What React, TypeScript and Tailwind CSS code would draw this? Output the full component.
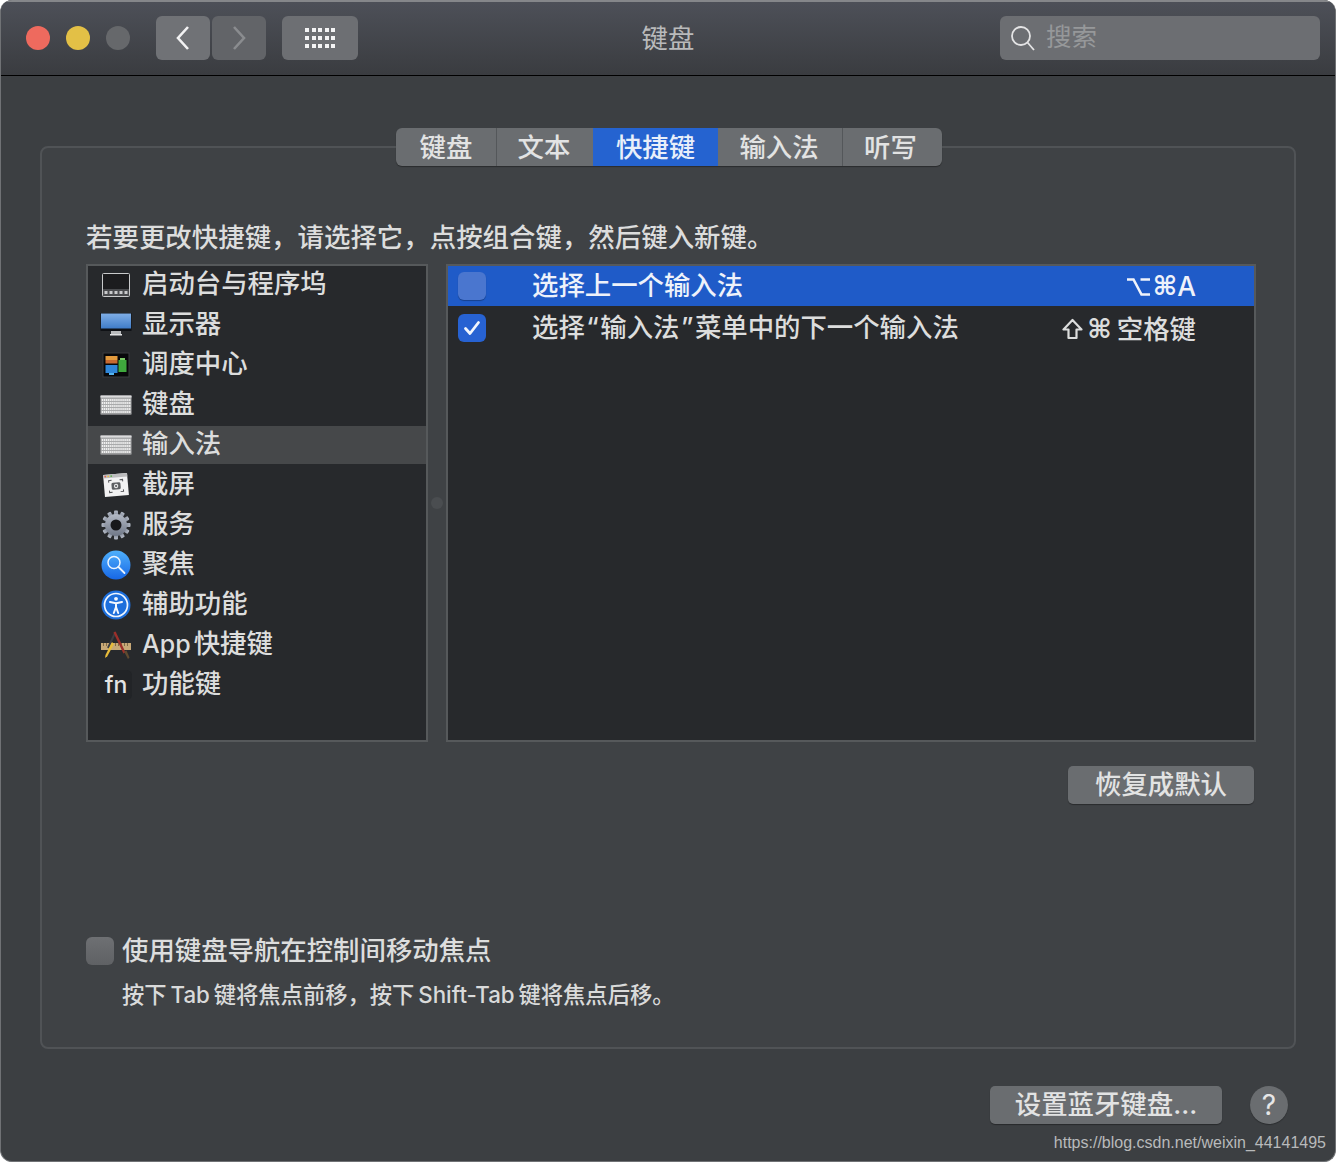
import * as React from 'react';

const FONT = "font-['Inter','Noto_Sans_CJK_SC','Noto_Sans',sans-serif]";

function Launchpad() {
  return (
    <svg width="30" height="26" viewBox="0 0 30 26">
      <rect x="1.5" y="1.5" width="27" height="23" rx="1" fill="#1c1c1e" stroke="#c9cacb" strokeWidth="1" />
      <rect x="2" y="17" width="26" height="7" fill="#4a4b4e" />
      {[5, 10, 15, 20, 25].map((x) => (
        <rect key={x} x={x - 1.5} y="19" width="3" height="3" fill="#c8c9cb" />
      ))}
    </svg>
  );
}

function Display() {
  return (
    <svg width="32" height="26" viewBox="0 0 32 26">
      <defs>
        <linearGradient id="screen" x1="0" y1="0" x2="0" y2="1">
          <stop offset="0" stopColor="#7faee6" />
          <stop offset="1" stopColor="#3f7cc8" />
        </linearGradient>
      </defs>
      <rect x="0.5" y="1" width="31" height="18" fill="#0f1115" />
      <rect x="1" y="1.5" width="30" height="15" fill="url(#screen)" />
      <rect x="11" y="19" width="10" height="3" fill="#b9babc" />
      <rect x="10" y="22" width="12" height="1.5" fill="#e1e2e3" />
    </svg>
  );
}

function MissionControl() {
  return (
    <svg width="28" height="26" viewBox="0 0 28 26">
      <rect x="1" y="1" width="26" height="24" fill="#08080a" stroke="#3b3c3f" />
      <rect x="3.500" y="4" width="12" height="4" fill="#e39a3d" />
      <rect x="3.500" y="8" width="12" height="3.500" fill="#c86a30" />
      <rect x="3.500" y="13" width="12" height="8" fill="#2f86d8" />
      <rect x="7" y="21" width="5" height="2" fill="#56b4ee" />
      <rect x="16.500" y="8" width="8" height="12" fill="#3fa93d" />
      <rect x="18" y="6" width="5" height="2" fill="#7bcb66" />
    </svg>
  );
}

function Keyboard() {
  return (
    <svg width="32" height="20" viewBox="0 0 32 20">
      <rect x="0.5" y="0.5" width="31" height="19" rx="1" fill="#a9aaab" />
      <rect x="0.5" y="0.5" width="31" height="2" fill="#dcdcdd" />
      {[4, 7, 10, 13, 16].map((y) =>
        Array.from({ length: 15 }).map((_, i) => (
          <rect key={`${y}-${i}`} x={1.800 + i * 1.95} y={y} width="1.3" height="2" fill="#f0f0f0" />
        )),
      )}
      <rect x="0.5" y="18.500" width="31" height="1" fill="#8d8e90" />
    </svg>
  );
}

function Screenshot() {
  return (
    <svg width="30" height="28" viewBox="0 0 30 28">
      <g transform="rotate(-5 15 14)">
        <rect x="3" y="3" width="24" height="22" fill="#f2f2f3" />
        <rect x="3" y="3" width="24" height="3.500" fill="#bcbcbe" />
        <circle cx="5" cy="4.700" r="0.900" fill="#e2624f" />
        <circle cx="8" cy="4.700" r="0.900" fill="#e7bf42" />
        <circle cx="11" cy="4.700" r="0.900" fill="#5cb04f" />
        <path d="M8 11v-2h3M19 9h3v2M22 19v2h-3M11 21H8v-2" fill="none" stroke="#55565a" strokeWidth="1" />
        <rect x="10.500" y="11.500" width="9" height="7" rx="1.500" fill="#5d5f63" />
        <circle cx="15" cy="15" r="2.200" fill="#e6e6e7" />
        <circle cx="15" cy="15" r="1.100" fill="#5d5f63" />
      </g>
    </svg>
  );
}

function Gear() {
  const teeth = Array.from({ length: 12 }).map((_, i) => i * 30);
  return (
    <svg width="30" height="30" viewBox="0 0 30 30">
      <defs>
        <linearGradient id="gear" x1="0" y1="0" x2="0" y2="1">
          <stop offset="0" stopColor="#b4bac6" />
          <stop offset="1" stopColor="#6f7787" />
        </linearGradient>
      </defs>
      {teeth.map((a) => (
        <rect key={a} x="13" y="0.500" width="4" height="7" rx="1" fill="url(#gear)" transform={`rotate(${a} 15 15)`} />
      ))}
      <circle cx="15" cy="15" r="11" fill="url(#gear)" />
      <circle cx="15" cy="15" r="5.500" fill="#17181b" />
    </svg>
  );
}

function Spotlight() {
  return (
    <svg width="30" height="30" viewBox="0 0 30 30">
      <defs>
        <linearGradient id="spot" x1="0" y1="0" x2="0" y2="1">
          <stop offset="0" stopColor="#4fb0fb" />
          <stop offset="1" stopColor="#1767e6" />
        </linearGradient>
      </defs>
      <circle cx="15" cy="15" r="14.500" fill="url(#spot)" />
      <circle cx="13" cy="12.500" r="6" fill="none" stroke="#eaf4ff" strokeWidth="1.500" />
      <path d="M17.500 17l6 6" stroke="#eaf4ff" strokeWidth="1.800" strokeLinecap="round" />
    </svg>
  );
}

function Accessibility() {
  return (
    <svg width="30" height="30" viewBox="0 0 30 30">
      <circle cx="15" cy="15" r="14.500" fill="#1d6fdc" />
      <circle cx="15" cy="15" r="11.500" fill="none" stroke="#eef5fe" strokeWidth="1.700" />
      <circle cx="15" cy="8.800" r="1.900" fill="#f4f8fe" />
      <path d="M9 12l6 1.200L21 12M15 13.200V17M15 17l-2.200 6M15 17l2.200 6" fill="none" stroke="#f4f8fe" strokeWidth="2" strokeLinecap="round" strokeLinejoin="round" />
    </svg>
  );
}

function AppIcon() {
  return (
    <svg width="32" height="30" viewBox="0 0 32 30">
      <path d="M1 13h30v7H1z" fill="#c7a877" />
      {[3, 6, 9, 12, 15, 18, 21, 24, 27].map((x) => (
        <rect key={x} x={x} y="13" width="0.800" height="3" fill="#6e5a3c" />
      ))}
      <path d="M15.500 2L8 18" stroke="#3c3d42" strokeWidth="2" />
      <path d="M14.500 2L24.500 23" stroke="#9c2f2a" strokeWidth="2.400" />
      <path d="M12 12L5.500 25l-.500 3 2.300-1.700L14 14z" fill="#e7bb3a" />
      <path d="M24 21.500l2.500-1 3 7-1.500 1.500z" fill="#5f4a30" />
    </svg>
  );
}

function FnIcon() {
  return (
    <div className="w-[32px] h-[30px] rounded-[5px] bg-[#222427] flex items-center justify-center text-[23px] leading-none text-[#e3e3e4]">
      fn
    </div>
  );
}

const categories: { label: React.ReactNode; key: string; icon: React.ReactNode }[] = [
  { key: 'launchpad', label: '启动台与程序坞', icon: <Launchpad /> },
  { key: 'display', label: '显示器', icon: <Display /> },
  { key: 'mission', label: '调度中心', icon: <MissionControl /> },
  { key: 'keyboard', label: '键盘', icon: <Keyboard /> },
  { key: 'input', label: '输入法', icon: <Keyboard /> },
  { key: 'screenshot', label: '截屏', icon: <Screenshot /> },
  { key: 'services', label: '服务', icon: <Gear /> },
  { key: 'spotlight', label: '聚焦', icon: <Spotlight /> },
  { key: 'a11y', label: '辅助功能', icon: <Accessibility /> },
  { key: 'app', label: <><span className="text-[25px] mr-[3px]">App</span>快捷键</>, icon: <AppIcon /> },
  { key: 'fn', label: '功能键', icon: <FnIcon /> },
];

const tabs = [
  { label: '键盘', w: 'w-[101px]' },
  { label: '文本', w: 'w-[96px] pr-[2px]' },
  { label: '快捷键', w: 'w-[125px]', active: true },
  { label: '输入法', w: 'w-[125px] pr-[2px]' },
  { label: '听写', w: 'w-[99px] pr-[4px]' },
];

function Check() {
  return (
    <svg width="18" height="16" viewBox="0 0 18 16">
      <path d="M2.500 8.500l4.500 5L15.500 2.500" fill="none" stroke="#f2f6fd" strokeWidth="2.800" strokeLinecap="round" strokeLinejoin="round" />
    </svg>
  );
}

function OptionKey() {
  return (
    <svg width="23" height="20" viewBox="0 0 23 20" className="mr-[3px] mt-[2px]">
      <path d="M0 2.500h6.500l8 15H23M13.500 2.500H23" fill="none" stroke="#f0f3fb" strokeWidth="2.600" />
    </svg>
  );
}

function ShiftKey() {
  return (
    <svg width="21" height="22" viewBox="0 0 21 22" className="mr-[4px] mt-[2px]">
      <path d="M10.500 2L1.500 11.500h5V20h8v-8.500h5z" fill="none" stroke="#dcdddd" strokeWidth="2.200" strokeLinejoin="round" />
    </svg>
  );
}

function PushButton({ className, children }: { className: string; children: React.ReactNode }) {
  return (
    <div className={`h-[38px] pb-[1px] rounded-[5px] bg-[#6a6d70] shadow-[0_1px_1px_rgba(0,0,0,0.35)] flex items-center justify-center text-[26.400px] font-medium text-[#e2e3e3] ${className}`}>
      {children}
    </div>
  );
}

export default function App() {
  return (
    <div className={`w-[1336px] h-[1162px] overflow-hidden bg-[#3c3f42] rounded-[12px] border-x border-b border-[#707275] flex flex-col font-medium ${FONT}`}>
      <header className="h-[76px] shrink-0 border-t-2 border-t-[#85878a] border-b border-b-black bg-gradient-to-b from-[#4d5058] to-[#3a3c40] flex items-center pl-[25px] pr-[15px]">
        <div className="flex items-center gap-[16px] -mt-[1px]">
          <span className="w-[24px] h-[24px] rounded-full bg-[#ee6a5e]" />
          <span className="w-[24px] h-[24px] rounded-full bg-[#e3c046]" />
          <span className="w-[24px] h-[24px] rounded-full bg-[#66686b]" />
        </div>
        <div className="flex gap-[2px] ml-[26px] -mt-[1px]">
          <div className="w-[54px] h-[44px] rounded-[6px] bg-[#707276] flex items-center justify-center">
            <svg width="16" height="26" viewBox="0 0 16 26">
              <path d="M13 2L3 13l10 11" fill="none" stroke="#f2f2f3" strokeWidth="2.600" />
            </svg>
          </div>
          <div className="w-[54px] h-[44px] rounded-[6px] bg-[#626468] flex items-center justify-center">
            <svg width="16" height="26" viewBox="0 0 16 26">
              <path d="M3 2l10 11L3 24" fill="none" stroke="#8a8c8f" strokeWidth="2.600" />
            </svg>
          </div>
        </div>
        <div className="w-[76px] h-[44px] rounded-[6px] bg-[#6d6f73] ml-[16px] -mt-[1px] flex items-center justify-center">
          <div className="grid grid-cols-5 gap-x-[2.500px] gap-y-[4px]">
            {Array.from({ length: 15 }).map((_, i) => (
              <span key={i} className="w-[4px] h-[4px] bg-[#f4f4f5]" />
            ))}
          </div>
        </div>
        <div className="flex-1 text-center text-[26.400px] font-normal text-[#b9babb] pr-[22px]">键盘</div>
        <div className="w-[320px] h-[44px] rounded-[6px] bg-[#6c6e72] flex items-center pl-[10px] gap-[10px] -mt-[1px]">
          <svg width="26" height="28" viewBox="0 0 26 28">
            <circle cx="11" cy="12" r="9" fill="none" stroke="#e4e4e5" strokeWidth="1.800" />
            <path d="M17.500 18.500L24 26" stroke="#e4e4e5" strokeWidth="1.800" />
          </svg>
          <span className="text-[25.500px] font-normal text-[#96989a] leading-none -mt-[2px]">搜索</span>
        </div>
      </header>

      <main className="flex-1 flex flex-col pl-[39px] pr-[39px] pt-[70px]">
        <section className="h-[903px] shrink-0 border-2 border-[#505356] rounded-[8px] bg-[#3f4245] flex flex-col">
          <div className="flex justify-center -mt-[20px] h-[38px] pl-[2px]">
            <div className="flex h-[38px] rounded-[6px] overflow-hidden bg-[#6a6d70] shadow-[0_1px_1px_rgba(0,0,0,0.35)]">
              {tabs.map((t, i) => (
                <div
                  key={t.label}
                  className={`${t.w} pt-[1px] flex items-center justify-center text-[26.400px] ${t.active ? 'bg-[#2563d0] text-[#e8effa]' : 'text-[#e2e3e3]'} ${i === 0 || i === 3 ? 'border-r border-[#54575a]' : ''}`}
                >
                  {t.label}
                </div>
              ))}
            </div>
          </div>

          <div className="pl-[44px] pr-[38px] pt-[52px] flex-1 flex flex-col">
            <p className="text-[26.440px] leading-[38px] text-[#dcdddd] h-[38px] whitespace-nowrap">若要更改快捷键，请选择它，点按组合键，然后键入新键。</p>

            <div className="flex mt-[8px] h-[478px]">
              <ul className="w-[342px] shrink-0 border-2 border-[#56595b] bg-[#27292c] flex flex-col gap-[2px]">
                {categories.map((c) => (
                  <li
                    key={c.key}
                    className={`h-[38px] flex items-center text-[26.400px] text-[#dcdddd] ${c.key === 'input' ? 'bg-[#46484a]' : ''}`}
                  >
                    <span className="w-[54px] shrink-0 flex justify-center pl-[2px]">{c.icon}</span>
                    <span className="whitespace-nowrap pb-[3px]">{c.label}</span>
                  </li>
                ))}
              </ul>
              <div className="w-[18px] shrink-0 flex items-center justify-center">
                <span className="w-[12px] h-[12px] rounded-full bg-[#4a4d50]" />
              </div>
              <div className="w-[810px] shrink-0 border-2 border-[#56595b] bg-[#27292c]">
                <div className="h-[40px] bg-[#1f5bc8] flex items-center pl-[10px] pr-[58px] text-[26.400px] text-[#eef2fa]">
                  <span className="w-[28px] h-[28px] rounded-[6px] bg-[#4a76cf] shadow-[0_1px_1px_rgba(0,0,0,0.3)]" />
                  <span className="ml-[46px] flex-1 whitespace-nowrap pb-[1px]">选择上一个输入法</span>
                  <OptionKey />
                  <span className="font-['DejaVu_Sans',sans-serif] font-bold whitespace-nowrap">⌘</span>
                  <span className="whitespace-nowrap pt-[2px]">A</span>
                </div>
                <div className="h-[44px] flex items-center pl-[10px] pr-[58px] text-[26.400px] text-[#dcdddd]">
                  <span className="w-[28px] h-[28px] rounded-[6px] bg-[#2762d2] flex items-center justify-center">
                    <Check />
                  </span>
                  <span className="ml-[46px] flex-1 whitespace-nowrap pb-[1px]">
                    选择<span className="px-[1.500px]">“</span>输入法<span className="px-[1.500px]">”</span>菜单中的下一个输入法
                  </span>
                  <ShiftKey />
                  <span className="font-['DejaVu_Sans',sans-serif] font-bold whitespace-nowrap mr-[5px] pt-[2px]">⌘</span>
                  <span className="whitespace-nowrap pt-[3px]">空格键</span>
                </div>
              </div>
            </div>

            <div className="flex justify-end mt-[24px] pr-[2px]">
              <PushButton className="w-[186px]">恢复成默认</PushButton>
            </div>

            <div className="flex items-center mt-[127px] gap-[8px]">
              <span className="w-[28px] h-[28px] rounded-[6px] bg-gradient-to-b from-[#6e7073] to-[#5f6164]" />
              <span className="text-[26.400px] text-[#dcdddd] whitespace-nowrap">使用键盘导航在控制间移动焦点</span>
            </div>
            <p className="ml-[36px] mt-[7px] text-[22.300px] text-[#d9dada] whitespace-nowrap">按下{'\u2009'}Tab{'\u2009'}键将焦点前移，按下{'\u2009'}Shift-Tab{'\u2009'}键将焦点后移。</p>
          </div>
        </section>

        <div className="flex justify-end items-start mt-[37px] mr-[8px] gap-[28px]">
          <PushButton className="w-[232px]">设置蓝牙键盘...</PushButton>
          <div className="w-[38px] h-[38px] rounded-full bg-[#6a6d70] flex items-center justify-center text-[28px] font-normal text-[#e6e6e7] shadow-[0_1px_1px_rgba(0,0,0,0.3)]">?</div>
        </div>
        <div className="flex justify-end -mr-[30px] mt-[8px] font-['Liberation_Sans',sans-serif] font-normal text-[16px] leading-[22px] text-[#b8babb] whitespace-nowrap">https://blog.csdn.net/weixin_44141495</div>
      </main>
    </div>
  );
}
